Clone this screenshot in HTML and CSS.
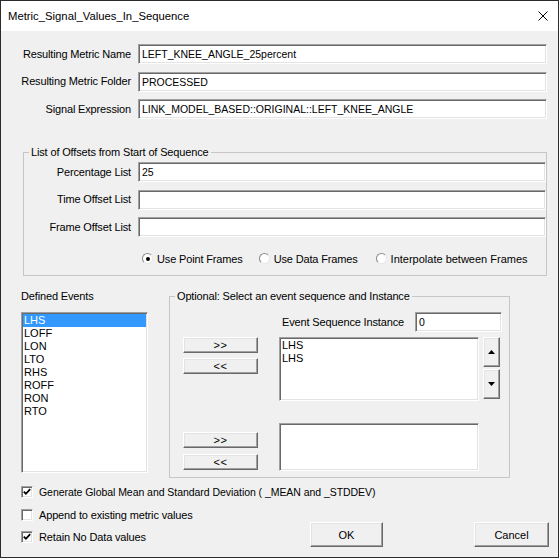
FILE: index.html
```html
<!DOCTYPE html>
<html lang="en">
<head>
<meta charset="utf-8">
<title>Metric_Signal_Values_In_Sequence</title>
<link rel="stylesheet" href="styles.css">
</head>
<body>
<div class="window">
  <div class="titlebar">
    <span class="title">Metric_Signal_Values_In_Sequence</span>
    <svg class="close" width="10" height="10" viewBox="0 0 10 10"><path d="M0.5 0.5 L9.5 9.5 M9.5 0.5 L0.5 9.5" stroke="#000" stroke-width="1"/></svg>
  </div>

  <div class="form-top">
    <span class="lbl-r">Resulting Metric Name</span><div class="field">LEFT_KNEE_ANGLE_25percent</div>
    <span class="lbl-r">Resulting Metric Folder</span><div class="field">PROCESSED</div>
    <span class="lbl-r">Signal Expression</span><div class="field">LINK_MODEL_BASED::ORIGINAL::LEFT_KNEE_ANGLE</div>
  </div>

  <fieldset class="group offsets">
    <legend>List of Offsets from Start of Sequence</legend>
    <div class="form-off">
      <span class="lbl-r">Percentage List</span><div class="field">25</div>
      <span class="lbl-r">Time Offset List</span><div class="field"></div>
      <span class="lbl-r">Frame Offset List</span><div class="field"></div>
    </div>
    <div class="radios">
      <div class="radio-item r1"><span class="radio checked"></span><span>Use Point Frames</span></div>
      <div class="radio-item r2"><span class="radio"></span><span>Use Data Frames</span></div>
      <div class="radio-item r3"><span class="radio"></span><span>Interpolate between Frames</span></div>
    </div>
  </fieldset>

  <div class="events">
    <div class="defined">
      <div class="cap">Defined Events</div>
      <div class="listbox lb1">
        <div class="item sel">LHS</div>
        <div class="item">LOFF</div>
        <div class="item">LON</div>
        <div class="item">LTO</div>
        <div class="item">RHS</div>
        <div class="item">ROFF</div>
        <div class="item">RON</div>
        <div class="item">RTO</div>
      </div>
    </div>
    <fieldset class="group optional">
      <legend>Optional: Select an event sequence and Instance</legend>
      <div class="inst-row"><span>Event Sequence Instance</span><div class="field inst">0</div></div>
      <div class="seq-row a">
        <div class="btn-col a"><button class="btn small">&gt;&gt;</button><button class="btn small">&lt;&lt;</button></div>
        <div class="listbox lb2"><div class="item">LHS</div><div class="item">LHS</div></div>
        <div class="scroll-col">
          <button class="btn sb"><svg width="7" height="4" viewBox="0 0 7 4"><polygon points="0,4 7,4 3.5,0" fill="#000"/></svg></button>
          <button class="btn sb"><svg width="7" height="4" viewBox="0 0 7 4"><polygon points="0,0 7,0 3.5,4" fill="#000"/></svg></button>
        </div>
      </div>
      <div class="seq-row b">
        <div class="btn-col b"><button class="btn small">&gt;&gt;</button><button class="btn small">&lt;&lt;</button></div>
        <div class="listbox lb3"></div>
      </div>
    </fieldset>
  </div>

  <div class="check-row first">
    <span class="cb checked"><svg width="8" height="8" viewBox="0 0 8 8"><path d="M0.8 3.6 L2.9 5.8 L7.2 1.2" fill="none" stroke="#000" stroke-width="1.8"/></svg></span>
    <span class="gen-text">Generate Global Mean and Standard Deviation ( _MEAN and _STDDEV)</span>
  </div>
  <div class="bottom-row">
    <div class="checks">
      <div class="check-row"><span class="cb"></span><span>Append to existing metric values</span></div>
      <div class="check-row"><span class="cb checked"><svg width="8" height="8" viewBox="0 0 8 8"><path d="M0.8 3.6 L2.9 5.8 L7.2 1.2" fill="none" stroke="#000" stroke-width="1.8"/></svg></span><span>Retain No Data values</span></div>
    </div>
    <div class="dlg-buttons">
      <button class="btn big ok">OK</button>
      <button class="btn big cancel">Cancel</button>
    </div>
  </div>
</div>
</body>
</html>
```

FILE: styles.css
```css
* { box-sizing: border-box; }
html, body { margin: 0; padding: 0; }
body {
  font-family: "Liberation Sans", Arial, sans-serif;
  font-size: 11px;
  letter-spacing: -0.15px;
  color: #000;
  background: #f0f0f0;
}
.window {
  width: 559px;
  height: 558px;
  border: 1px solid #2b2b2b;
  background: #f0f0f0;
  overflow: hidden;
}
.titlebar {
  height: 30px;
  background: #fff;
  display: flex;
  align-items: center;
  justify-content: space-between;
  padding: 0 10px 0 7px;
}
.title { font-size: 11.3px; line-height: 14px; letter-spacing: 0; }
.close { display: block; }

.lbl-r {
  text-align: right;
  align-self: center;
  line-height: 13px;
  white-space: nowrap;
}
.field {
  background: #fff;
  border: 1px solid;
  border-color: #a0a0a0 #fff #fff #a0a0a0;
  box-shadow: inset 1px 1px 0 #696969, inset -1px -1px 0 #e3e3e3;
  padding: 0 3px;
  line-height: 18px;
  font-size: 10.5px;
  letter-spacing: 0;
  white-space: nowrap;
  overflow: hidden;
}
.form-top {
  display: grid;
  grid-template-columns: 130px 409px;
  grid-template-rows: repeat(3, 20px);
  column-gap: 7px;
  row-gap: 7.5px;
  margin-top: 13px;
}

.group {
  border: 1px solid #c6c6c6;
  margin: 0;
  min-width: 0;
}
.group legend {
  padding: 0 2px;
  margin-left: 5px;
  line-height: 14px;
}
.offsets {
  margin: 26px 0 0 22px;
  width: 524px;
  padding: 3px 0 10px 0;
}
.form-off {
  display: grid;
  grid-template-columns: 107px 408px;
  grid-template-rows: repeat(3, 20px);
  column-gap: 7px;
  row-gap: 7.5px;
}
.radios {
  display: flex;
  align-items: center;
  height: 13px;
  margin: 15px 0 0 118px;
}
.radio-item { display: flex; align-items: center; gap: 4px; white-space: nowrap; }
.radio-item.r2 { margin-left: 16px; }
.radio-item.r3 { margin-left: 18px; }
.radio-item.r3 span:last-child { letter-spacing: 0; }
.radio {
  width: 11px;
  height: 11px;
  border-radius: 50%;
  background: #fff;
  border: 1px solid;
  border-color: #8a8a8a #e8e8e8 #e8e8e8 #8a8a8a;
  display: flex;
  align-items: center;
  justify-content: center;
}
.radio.checked::after {
  content: "";
  width: 4px;
  height: 4px;
  border-radius: 50%;
  background: #000;
}

.events {
  display: flex;
  align-items: flex-start;
  gap: 21px;
  margin: 13px 0 0 20px;
}
.defined { width: 127px; }
.defined .cap { line-height: 14px; margin-bottom: 9px; }
.listbox {
  background: #fff;
  border: 1px solid;
  border-color: #a0a0a0 #fff #fff #a0a0a0;
  box-shadow: inset 1px 1px 0 #696969, inset -1px -1px 0 #e3e3e3;
  padding: 1px;
}
.lb1 { height: 161px; }
.item { line-height: 13px; padding-left: 1px; white-space: nowrap; letter-spacing: 0; }
.item.sel { background: #3399ff; color: #fff; }

.optional {
  width: 341px;
  padding: 9px 0 6px 0;
}
.inst-row {
  display: flex;
  justify-content: flex-end;
  align-items: center;
  gap: 11px;
  padding-right: 7px;
  height: 20px;
}
.field.inst { width: 87px; height: 20px; }
.seq-row { display: flex; align-items: flex-start; margin-left: 13px; }
.seq-row.a { margin-top: 5px; }
.seq-row.b { margin-top: 22px; }
.btn-col { width: 75px; margin-right: 21px; display: flex; flex-direction: column; }
.btn-col.a { gap: 5px; }
.btn-col.b { gap: 6px; padding-top: 9px; }
.lb2 { width: 200px; height: 64px; }
.lb3 { width: 200px; height: 48px; }
.scroll-col { width: 17px; margin-left: 4px; display: flex; flex-direction: column; gap: 2px; }

.btn {
  background: #f0f0f0;
  border: 1px solid;
  border-color: #fff #696969 #696969 #fff;
  box-shadow: inset -1px -1px 0 #a0a0a0, inset 1px 1px 0 #e3e3e3;
  font: inherit;
  letter-spacing: 0;
  color: #000;
  padding: 0;
  margin: 0;
  display: flex;
  align-items: center;
  justify-content: center;
}
.btn svg { display: block; }
.btn.small { height: 16px; width: 75px; line-height: 13px; letter-spacing: 0.5px; }
.btn.sb { height: 30px; width: 17px; }

.check-row {
  display: flex;
  align-items: center;
  gap: 6px;
  height: 12px;
  white-space: nowrap;
}
.check-row.first { margin: 8px 0 0 20px; }
.gen-text { font-size: 10.5px; letter-spacing: -0.05px; }
.cb {
  width: 12px;
  height: 12px;
  flex: none;
  background: #fff;
  border: 1px solid;
  border-color: #a0a0a0 #fff #fff #a0a0a0;
  box-shadow: inset 1px 1px 0 #696969, inset -1px -1px 0 #e3e3e3;
  display: flex;
  align-items: center;
  justify-content: center;
}
.cb svg { display: block; }
.bottom-row { display: flex; margin-top: 11px; }
.checks { display: flex; flex-direction: column; gap: 10px; margin-left: 20px; }
.dlg-buttons { display: flex; gap: 91px; margin: 13px 9px 0 auto; }
.btn.big { height: 25px; }
.btn.ok { width: 73px; }
.btn.cancel { width: 75px; }
```
